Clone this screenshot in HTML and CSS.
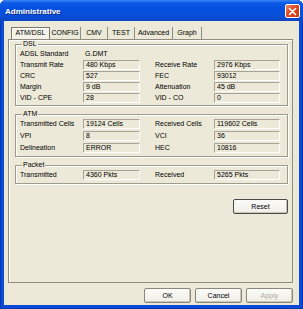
FILE: index.html
```
<!DOCTYPE html>
<html>
<head>
<meta charset="utf-8">
<link rel="stylesheet" href="styles.css">
</head>
<body>
<div class="win">
  <div class="titlebar">
    <span class="title">Administrative</span>
    <span class="close"><svg width="9" height="9" viewBox="0 0 9 9"><path d="M1.5 1.5 L7.5 7.5 M7.5 1.5 L1.5 7.5" stroke="#fff" stroke-width="1.6" stroke-linecap="round"/></svg></span>
  </div>
  <div class="client">
    <div class="tabs">
      <div class="tab sel">ATM/DSL</div>
      <div class="tab">CONFIG</div>
      <div class="tab">CMV</div>
      <div class="tab">TEST</div>
      <div class="tab">Advanced</div>
      <div class="tab">Graph</div>
    </div>
    <div class="panel">
      <fieldset class="group">
        <legend>DSL</legend>
        <div class="grid">
          <div class="lbl">ADSL Standard</div><div class="plain">G.DMT</div><div></div><div></div>
          <div class="lbl">Transmit Rate</div><div class="val">480 Kbps</div><div class="lbl r">Receive Rate</div><div class="val">2976 Kbps</div>
          <div class="lbl">CRC</div><div class="val">527</div><div class="lbl r">FEC</div><div class="val">93012</div>
          <div class="lbl">Margin</div><div class="val">9 dB</div><div class="lbl r">Attenuation</div><div class="val">45 dB</div>
          <div class="lbl">VID - CPE</div><div class="val">28</div><div class="lbl r">VID - CO</div><div class="val">0</div>
        </div>
      </fieldset>
      <fieldset class="group atm">
        <legend>ATM</legend>
        <div class="grid tall">
          <div class="lbl">Transmitted Cells</div><div class="val">19124 Cells</div><div class="lbl r">Received Cells</div><div class="val">119602 Cells</div>
          <div class="lbl">VPI</div><div class="val">8</div><div class="lbl r">VCI</div><div class="val">36</div>
          <div class="lbl">Delineation</div><div class="val">ERROR</div><div class="lbl r">HEC</div><div class="val">10816</div>
        </div>
      </fieldset>
      <fieldset class="group pkt">
        <legend>Packet</legend>
        <div class="grid tall">
          <div class="lbl">Transmitted</div><div class="val">4360 Pkts</div><div class="lbl r">Received</div><div class="val">5265 Pkts</div>
        </div>
      </fieldset>
      <div class="resetrow"><div class="btn reset">Reset</div></div>
    </div>
    <div class="buttons">
      <div class="btn">OK</div>
      <div class="btn">Cancel</div>
      <div class="btn dis">Apply</div>
    </div>
  </div>
</div>
</body>
</html>
```
FILE: styles.css
```
* { box-sizing: border-box; }
html, body { margin: 0; padding: 0; background: #fff; }
body { font-family: "Liberation Sans", Arial, sans-serif; font-size: 7px; color: #000; }
.win {
  width: 303px; height: 309px;
  background: #0a4ad6;
  display: flex; flex-direction: column;
  border-radius: 6px 6px 0 0;
  overflow: hidden;
  box-shadow: inset 1px 0 #0838b0, inset -1px 0 #0838b0, inset 0 -1px #0838b0;
}
.titlebar {
  height: 21px; flex: none;
  background: linear-gradient(#3b86f5 0, #0c5ae6 3px, #0550e0 9px, #0a4ed8 16px, #0c44c4 21px);
  display: flex; align-items: center; justify-content: space-between;
  padding: 0 3px 0 5px;
}
.title { color: #fff; font-weight: bold; font-size: 8px; text-shadow: 1px 1px 0 #0a2a88; margin-top: 1px; }
.close {
  width: 15px; height: 14px;
  background: linear-gradient(135deg, #f08a6a, #dd4a24 45%, #c83a18);
  border: 1px solid #fff; border-radius: 2px;
  display: flex; align-items: center; justify-content: center;
  margin-top: 1px;
}
.client {
  flex: 1;
  margin: 0 4px 4px 4px;
  background: #ece9d8;
  padding: 6px 0 0 4px;
  display: flex; flex-direction: column;
}
.tabs {
  display: grid;
  grid-template-columns: 3px 39px 31px 27px 27px 38px 29px;
  height: 12px;
}
.tabs::before { content: ""; }
.tab {
  border-right: 1px solid #8f8c80;
  line-height: 12px; text-align: center;
  font-size: 7px;
}
.tab.sel {
  border: 1px solid #7a776c;
  border-bottom: none;
  background: #f4f2e8;
  line-height: 10px;
  box-shadow: inset 1px 1px #fff;
}
.panel {
  width: 285px; height: 244px;
  border: 1px solid #8f8c80;
  box-shadow: inset 1px 1px #fff;
  padding: 0 4px 0 6px;
  display: flex; flex-direction: column;
}
.group {
  margin: 0; padding: 0 0 2px 4px;
  border: 1px solid #9d9a8e;
  box-shadow: inset 1px 1px #fff, 1px 1px #fff;
  min-width: 0;
}
.group legend {
  font-size: 7px; line-height: 8px; padding: 0 1px; margin-left: 2px;
}
.atm { margin-top: 4px; }
.pkt { margin-top: 4px; }
.grid {
  display: grid;
  grid-template-columns: 63px 57px 74px 66px;
  grid-auto-rows: 11px;
}
.grid.tall { grid-auto-rows: 12px; }
.lbl { line-height: 11px; white-space: nowrap; }
.tall .lbl { line-height: 12px; }
.lbl.r { padding-left: 15px; }
.plain { line-height: 11px; padding-left: 2px; }
.val {
  height: 10px; margin-top: 1px;
  border-top: 1px solid #a7a497;
  border-left: 1px solid #a7a497;
  border-right: 1px solid #fff;
  border-bottom: 1px solid #fff;
  line-height: 8px; padding-left: 2px; white-space: nowrap;
}
.tall .val { margin-top: 1px; height: 10px; }
.resetrow { display: flex; justify-content: flex-end; margin-top: 15px; }
.btn {
  width: 47px; height: 15px;
  border: 1px solid #8a877b;
  border-radius: 2px;
  background: linear-gradient(#fbfbf8, #f0efe8);
  box-shadow: inset -1px -1px #c9c6b6;
  text-align: center; line-height: 13px; font-size: 7px;
}
.btn.reset { width: 55px; border-color: #4a4a4a; }
.btn.dis { color: #b0ad9e; }
.buttons {
  display: flex; justify-content: flex-end; gap: 4px;
  margin-top: 5px; padding-right: 6px;
}
```
